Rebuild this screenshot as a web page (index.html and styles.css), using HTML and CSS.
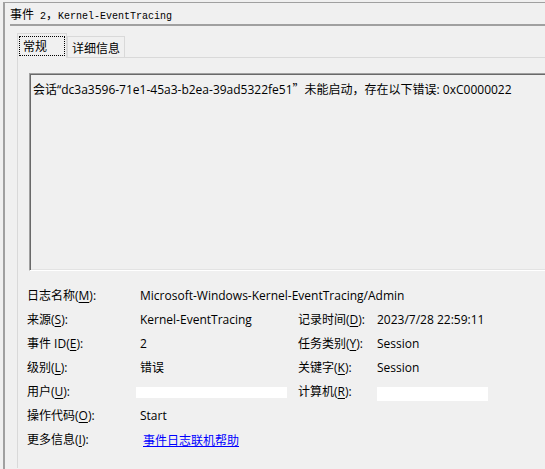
FILE: index.html
```html
<!DOCTYPE html>
<html lang="zh-CN">
<head>
<meta charset="utf-8">
<title>事件 2，Kernel-EventTracing</title>
<link rel="stylesheet" href="styles.css">
</head>
<body>
<div class="window">
  <div class="title"><span class="cjk">事件</span> 2<span class="cjk">，</span>Kernel-EventTracing</div>
  <div class="tabs">
    <div class="tab active"><span class="focus">常规</span></div>
    <div class="tab">详细信息</div>
  </div>
  <div class="panel">
    <div class="desc">会话“dc3a3596-71e1-45a3-b2ea-39ad5322fe51<span class="q">”</span>未能启动，存在以下错误: 0xC0000022</div>
    <div class="fields">
      <div class="label">日志名称(<u>M</u>):</div>
      <div class="value wide">Microsoft-Windows-Kernel-EventTracing/Admin</div>

      <div class="label">来源(<u>S</u>):</div>
      <div class="value">Kernel-EventTracing</div>
      <div class="label">记录时间(<u>D</u>):</div>
      <div class="value">2023/7/28 22:59:11</div>

      <div class="label">事件 ID(<u>E</u>):</div>
      <div class="value">2</div>
      <div class="label">任务类别(<u>Y</u>):</div>
      <div class="value">Session</div>

      <div class="label">级别(<u>L</u>):</div>
      <div class="value">错误</div>
      <div class="label">关键字(<u>K</u>):</div>
      <div class="value">Session</div>

      <div class="label">用户(<u>U</u>):</div>
      <div class="value"><span class="redact redact-user"></span></div>
      <div class="label">计算机(<u>R</u>):</div>
      <div class="value"><span class="redact redact-pc"></span></div>

      <div class="label">操作代码(<u>O</u>):</div>
      <div class="value wide">Start</div>

      <div class="label">更多信息(<u>I</u>):</div>
      <div class="value wide"><a class="link" href="#">事件日志联机帮助</a></div>
    </div>
  </div>
</div>
</body>
</html>
```

FILE: styles.css
```css
html, body {
  margin: 0;
  padding: 0;
  background: #f0f0f0;
}
body {
  width: 545px;
  height: 469px;
  overflow: hidden;
  font-family: "Open Sans", "Noto Sans CJK SC", sans-serif;
  font-size: 12px;
  color: #000;
}
.window {
  margin-top: 2px;
  margin-left: 3px;
  border-top: 1px solid #a0a0a0;
  border-left: 2px solid #a0a0a0;
  height: 466px;
  width: 540px;
}
.title {
  margin-left: 5px;
  height: 21px;
  line-height: 21px;
  border-bottom: 2px solid #a0a0a0;
  font-family: "Liberation Mono", "Noto Sans CJK SC", monospace;
  font-size: 10px;
  white-space: nowrap;
}
.title .cjk {
  font-family: "Noto Sans CJK SC", sans-serif;
  font-size: 12px;
}
.tabs {
  display: flex;
  align-items: flex-end;
  margin-left: 12px;
  margin-top: 7px;
  height: 25px;
  position: relative;
  z-index: 1;
}
.tab {
  height: 21px;
  line-height: 21px;
  padding: 0 4px;
  border: 1px solid #d9d9d9;
  border-bottom: none;
  font-family: "Noto Sans CJK SC", sans-serif;
  white-space: nowrap;
}
.tab.active {
  height: 25px;
  padding: 0 1px;
  width: 50px;
  background: #f0f0f0;
  box-sizing: border-box;
}
.focus {
  display: block;
  margin-top: 2px;
  height: 18px;
  line-height: 18px;
  padding-left: 3px;
  border: 1px dotted #000;
}
.panel {
  margin-left: 12px;
  border-top: 1px solid #d9d9d9;
  border-left: 1px solid #d9d9d9;
  margin-top: -1px;
  padding: 15px 0 0 11px;
  height: 395px;
  overflow: hidden;
}
.desc {
  border-top: 1px solid #a0a0a0;
  border-left: 1px solid #a0a0a0;
  border-bottom: 1px solid #ffffff;
  box-shadow: inset 1px 1px 0 #696969, inset 0 -1px 0 #e3e3e3;
  padding: 7px 0 0 3px;
  line-height: 16px;
  white-space: nowrap;
  box-sizing: border-box;
  height: 198px;
}
.q {
  font-family: "Noto Sans CJK SC", sans-serif;
}
.fields {
  display: grid;
  grid-template-columns: 113px 158px 79px 130px;
  grid-auto-rows: 24px;
  margin-top: 13px;
  margin-left: -2px;
  align-items: center;
  white-space: nowrap;
}
.label, .value {
  line-height: 16px;
}
.wide {
  grid-column: 2 / 5;
}
u {
  text-decoration: underline;
  text-underline-offset: 2px;
}
.redact {
  display: block;
  background: #ffffff;
}
.redact-user {
  margin-left: -4px;
  width: 151px;
  height: 11px;
}
.redact-pc {
  width: 111px;
  height: 14px;
  margin-top: 3px;
}
.link {
  margin-left: 3px;
  color: #0000ff;
  text-decoration: underline;
  font-family: "Noto Sans CJK SC", sans-serif;
}
```
